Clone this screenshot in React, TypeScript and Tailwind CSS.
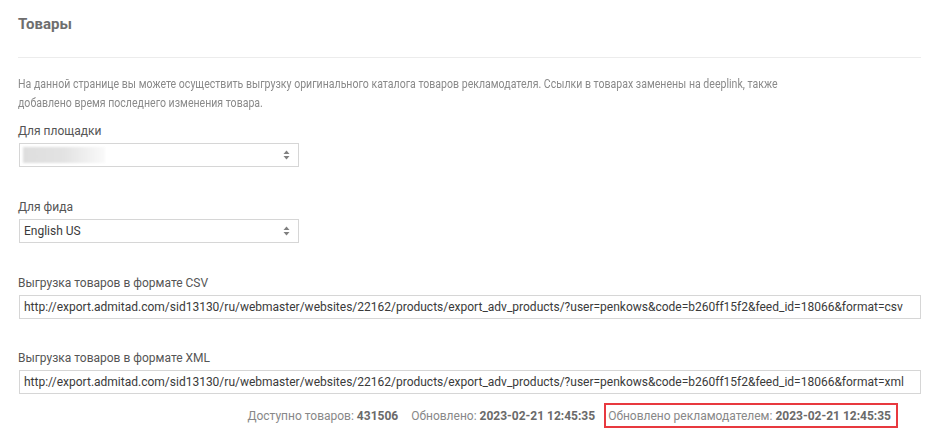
import React from "react";

const Arrows = () => (
  <svg width="9" height="12" viewBox="0 0 9 12" className="absolute right-[7px] top-1/2 -translate-y-1/2">
    <path d="M4.5 1.5 L7.5 5 L1.5 5 Z" fill="#808080" />
    <path d="M4.5 10.5 L7.5 7 L1.5 7 Z" fill="#808080" />
  </svg>
);

export default function App() {
  return (
    <div
      className="w-[940px] h-[441px] bg-white overflow-hidden pl-[18px] pr-[19px] pt-[14px]"
      style={{ fontFamily: "Roboto, 'Liberation Sans', sans-serif" }}
    >
      <div className="text-[15px] leading-[20px] font-bold text-[#6e6e6e]">Товары</div>
      <div className="mt-[23px] h-px bg-[#ececec]" />
      <p className="mt-[16px] text-[13px] leading-[19px] text-[#8a8a8a] whitespace-nowrap origin-left scale-x-[0.812]">
        На данной странице вы можете осуществить выгрузку оригинального каталога товаров рекламодателя. Ссылки в товарах заменены на deeplink, также
        <br />
        добавлено время последнего изменения товара.
      </p>

      <div className="mt-[10px]">
        <div className="text-[12px] leading-[18px] text-[#555]">Для площадки</div>
        <div className="relative mt-[3px] ml-px w-[280px] h-[24px] border border-[#d6d6d6] bg-white">
          <div className="absolute left-[3px] top-[3px] w-[82px] h-[16px] bg-gradient-to-r from-[#dedede] via-[#e3e3e3] to-[#fafafa] blur-[1px]" />
          <Arrows />
        </div>
      </div>

      <div className="mt-[31px]">
        <div className="text-[12px] leading-[18px] text-[#555]">Для фида</div>
        <div className="relative mt-[3px] ml-px w-[280px] h-[24px] border border-[#d6d6d6] bg-white flex items-center pl-[4px] text-[12px] text-[#3a3a3a]">
          English US
          <Arrows />
        </div>
      </div>

      <div className="mt-[31px]">
        <div className="text-[12px] leading-[18px] text-[#555]">Выгрузка товаров в формате CSV</div>
        <div className="mt-[3px] ml-px h-[24px] border border-[#d6d6d6] bg-white flex items-center pl-[4px] text-[12px] text-[#3a3a3a] whitespace-nowrap overflow-hidden">
          http://export.admitad.com/sid13130/ru/webmaster/websites/22162/products/export_adv_products/?user=penkows&amp;code=b260ff15f2&amp;feed_id=18066&amp;format=csv
        </div>
      </div>

      <div className="mt-[30px]">
        <div className="text-[12px] leading-[18px] text-[#555]">Выгрузка товаров в формате XML</div>
        <div className="mt-[3px] ml-px h-[24px] border border-[#d6d6d6] bg-white flex items-center pl-[4px] text-[12px] text-[#3a3a3a] whitespace-nowrap overflow-hidden">
          http://export.admitad.com/sid13130/ru/webmaster/websites/22162/products/export_adv_products/?user=penkows&amp;code=b260ff15f2&amp;feed_id=18066&amp;format=xml
        </div>
      </div>

      <div className="mt-[9px] flex justify-end items-center pr-[23px] text-[12px] text-[#888]">
        <span className="mr-[13px]">
          Доступно товаров: <b className="font-bold text-[#6a6a6a]">431506</b>
        </span>
        <span className="mr-[9px]">
          Обновлено: <b className="font-bold text-[#6a6a6a]">2023-02-21 12:45:35</b>
        </span>
        <span className="border-2 border-[#e8393f] h-[25px] flex items-center pl-[2px] pr-[5px]">
          <span>
            Обновлено рекламодателем: <b className="font-bold text-[#6a6a6a]">2023-02-21 12:45:35</b>
          </span>
        </span>
      </div>
    </div>
  );
}
